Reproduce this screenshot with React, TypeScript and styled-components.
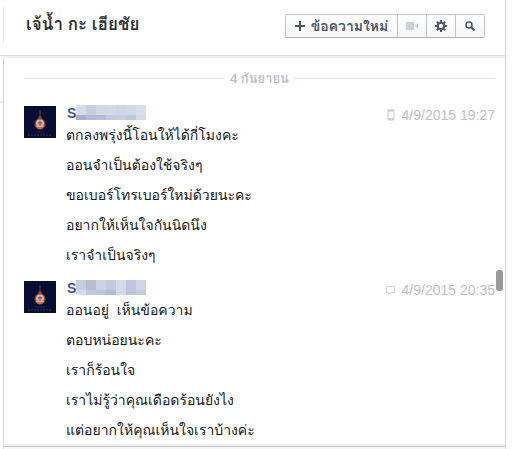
import React from "react";
import styled, { createGlobalStyle } from "styled-components";

const GlobalStyle = createGlobalStyle`
  * { box-sizing: border-box; }
  html, body { margin: 0; background: #fff; }
  body { font-family: "Liberation Sans", Tahoma, Loma, Waree, "Noto Sans Thai", "Noto Sans", sans-serif; overflow: hidden; }
`;

const Page = styled.div`
  display: grid;
  grid-template-columns: 3px minmax(0, 1fr) 9px;
  grid-template-rows: minmax(0, 1fr);
  height: 100vh;
`;

const Rail = styled.aside`
  display: flex;
  flex-direction: column;
  padding-top: 55px;
`;

const RailItem = styled.div`
  height: 48px;
  border-top: 1px solid #dcdcdc;
  border-bottom: 2px solid #e4e4e4;
`;

const Panel = styled.main`
  display: flex;
  flex-direction: column;
  border-right: 1px solid #d8d8d8;
`;

const Header = styled.header`
  display: flex;
  flex: none;
  height: 58px;
  padding: 7px 20px 0 0;
  border-bottom: 2px solid #eeeeee;
  box-shadow: inset 0 -1px #dcdcdc;
`;

const Title = styled.h1`
  display: flex;
  align-items: center;
  flex: 1;
  height: 35px;
  margin: 0;
  padding-left: 22px;
  border-left: 1px solid #e2e2e2;
  color: #333;
  font-size: 17px;
  line-height: 24px;
  white-space: nowrap;
`;

const Toolbar = styled.div`
  display: flex;
  height: 24px;
  margin-top: 7px;
  border: 1px solid #c4c5c8;
  border-bottom-color: #b0b2b6;
  border-radius: 2px;
`;

const ToolButton = styled.button<{ $wide?: boolean }>`
  display: flex;
  align-items: center;
  justify-content: center;
  gap: 6px;
  width: ${(p) => (p.$wide ? "112px" : "29px")};
  padding: 0;
  border: 0;
  border-right: 1px solid #c4c5c8;
  background: linear-gradient(#fff, #f5f6f8);
  color: #4e5665;
  font-family: inherit;
  font-size: 14px;
  font-weight: bold;
  line-height: 20px;
  white-space: nowrap;
  &:last-child { width: 28px; border-right: 0; }
  &:disabled { color: #cdd0d5; }
`;

const Thread = styled.section`
  flex: 1;
  min-height: 0;
  overflow: hidden;
  position: relative;
  padding: 9px 10px 0 20px;
  border-left: 1px solid #d8d8d8;
  border-bottom: 2px solid #eeeeee;
`;

const DateRow = styled.div`
  display: flex;
  align-items: center;
  gap: 5px;
  height: 22px;
  margin-bottom: 16px;
  color: #bdc1c9;
  font-size: 13px;
  font-weight: bold;
  &::before, &::after { content: ""; flex: 1; height: 1px; background: #e5e5e5; }
`;

const Message = styled.article`
  display: grid;
  grid-template-columns: 32px minmax(0, 1fr);
  column-gap: 10px;
  margin-bottom: 10px;
`;

const Avatar = styled.svg`
  width: 32px;
  height: 32px;
  margin-top: 1px;
`;

const Meta = styled.div`
  display: flex;
  align-items: center;
  justify-content: space-between;
  height: 15px;
`;

const Sender = styled.a`
  display: flex;
  align-items: center;
  padding-left: 1px;
  color: #3b5998;
  font-size: 14px;
  font-weight: bold;
  line-height: 16px;
  text-decoration: none;
`;

const Mask = styled.svg`
  display: block;
`;

const Time = styled.time`
  display: flex;
  align-items: center;
  gap: 6px;
  color: #bdc1c9;
  font-size: 14px;
  line-height: 20px;
  padding-top: 5px;
`;

const Line = styled.p`
  height: 30px;
  margin: 0;
  color: #141823;
  font-size: 14px;
  line-height: 30px;
  white-space: pre;
`;

const Thumb = styled.div`
  position: absolute;
  top: 212px;
  right: 2px;
  width: 7px;
  height: 21px;
  border-radius: 3px;
  background: #999;
`;

const Footer = styled.footer`
  flex: none;
  height: 3px;
  border-top: 1px solid #c8c8c8;
  border-left: 1px solid #d8d8d8;
  background: #f6f7f8;
`;

const Emblem = () => (
  <Avatar viewBox="0 0 32 32" role="img" aria-label="avatar">
    <rect width="32" height="32" fill="#080d32" />
    <path d="M16 4v8" stroke="#6c4038" />
    <path d="M13 14l2-4h2l2 4z" fill="#7c4436" />
    <circle cx="16" cy="18" r="5.500" fill="#8f4a38" />
    <circle cx="16" cy="17.500" r="4" fill="#d6ad98" />
    <path d="M12 20q4 5 8 0" fill="none" stroke="#d0805d" />
    <path d="M14 17h4M16 15v5" stroke="#704b65" />
    <path d="M11 26h10" stroke="#242443" />
    <path d="M4 29h24" stroke="#31344e" strokeDasharray="2 1" />
  </Avatar>
);

const NameMask = ({ colors }: { colors: string[][] }) => (
  <Mask width="70" height="15" viewBox="0 0 70 15" shapeRendering="crispEdges">
    {colors.map((row, y) =>
      row.map((c, x) => <rect key={`${x}-${y}`} x={x * 10} y={y * 10} width="10" height="10" fill={c} />)
    )}
  </Mask>
);

const PhoneIcon = () => (
  <svg width="9" height="12" viewBox="0 0 9 12" fill="none">
    <rect x="1" y="1" width="6" height="10" rx="1" stroke="#c9cacd" />
    <path d="M1 1.500h6M1 10h6" stroke="#c9cacd" strokeWidth="2" />
    <path d="M3.500 10h1" stroke="#fff" />
  </svg>
);

const BubbleIcon = () => (
  <svg width="10" height="10" viewBox="0 0 10 10">
    <path d="M.5 1.500h8v6h-4l-2 2v-2h-2z" fill="none" stroke="#cfd0d3" />
  </svg>
);

const messages = [
  {
    time: "4/9/2015 19:27",
    icon: <PhoneIcon />,
    mask: [
      ["#d9dbe6", "#c8cde0", "#d5d7e4", "#d5d9e6", "#cfd5e5", "#d3d8e7", "#d9dde9"],
      ["#a9aeca", "#b3bad5", "#b8bdd5", "#c4cadd", "#c6ccdf", "#bfc7dc", "#d5d9e6"],
    ],
    lines: ["ตกลงพรุ่งนี้โอนให้ได้กี่โมงคะ", "ออนจำเป็นต้องใช้จริงๆ", "ขอเบอร์โทรเบอร์ใหม่ด้วยนะคะ", "อยากให้เห็นใจกันนิดนึง", "เราจำเป็นจริงๆ"],
  },
  {
    time: "4/9/2015 20:35",
    icon: <BubbleIcon />,
    mask: [
      ["#c5cde1", "#babbd1", "#cdd3e4", "#c2cadf", "#d6dae6", "#bfc5dc", "#cdd5e6"],
      ["#d5dbe9", "#c5c9dd", "#bcc4db", "#b4bdd7", "#d3d8e5", "#bdc4dc", "#c3cbdf"],
    ],
    lines: ["ออนอยู่  เห็นข้อความ", "ตอบหน่อยนะคะ", "เราก็ร้อนใจ", "เราไม่รู้ว่าคุณเดือดร้อนยังไง", "แต่อยากให้คุณเห็นใจเราบ้างค่ะ"],
  },
];

export default function App() {
  return (
    <>
      <GlobalStyle />
      <Page>
        <Rail><RailItem /></Rail>
        <Panel>
          <Header>
            <Title>เจ้น้ำ กะ เฮียชัย</Title>
            <Toolbar>
              <ToolButton $wide>
                <svg width="10" height="10"><path d="M5 0v10M0 5h10" stroke="#4e5665" strokeWidth="2" /></svg>
                ข้อความใหม่
              </ToolButton>
              <ToolButton disabled aria-label="Video call">
                <svg width="13" height="8" fill="currentColor"><rect width="8" height="8" rx="1" /><path d="M9 4l3-3v6z" /></svg>
              </ToolButton>
              <ToolButton aria-label="Settings">
                <svg width="12" height="12" viewBox="0 0 12 12">
                  <path d="M6 0v12M0 6h12M1.800 1.800l8.400 8.400M10.200 1.800l-8.400 8.400" stroke="#4e5665" strokeWidth="2" />
                  <circle cx="6" cy="6" r="3.200" fill="#f9fafb" stroke="#4e5665" strokeWidth="2" />
                </svg>
              </ToolButton>
              <ToolButton aria-label="Search">
                <svg width="10" height="10" viewBox="0 0 10 10" fill="none" stroke="#4e5665">
                  <circle cx="4" cy="4" r="3" strokeWidth="1.500" /><path d="M6 6l3.500 3.500" strokeWidth="2" />
                </svg>
              </ToolButton>
            </Toolbar>
          </Header>
          <Thread>
            <DateRow>4 กันยายน</DateRow>
            {messages.map((m) => (
              <Message key={m.time}>
                <Emblem />
                <div>
                  <Meta>
                    <Sender href="#">S<NameMask colors={m.mask} /></Sender>
                    <Time>{m.icon}{m.time}</Time>
                  </Meta>
                  {m.lines.map((l) => <Line key={l}>{l}</Line>)}
                </div>
              </Message>
            ))}
            <Thumb />
          </Thread>
          <Footer />
        </Panel>
      </Page>
    </>
  );
}
